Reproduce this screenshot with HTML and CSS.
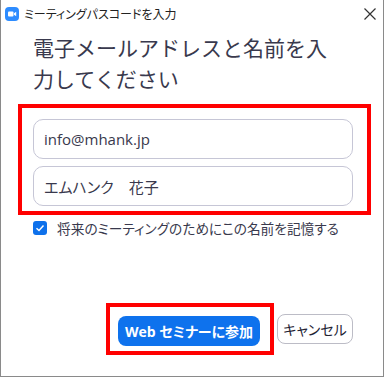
FILE: index.html
```html
<!DOCTYPE html>
<html lang="ja">
<head>
  <meta charset="UTF-8" />
  <title>ミーティングパスコードを入力</title>
  <link rel="stylesheet" href="styles.css">
</head>
<body>
  <div class="window">
    <div class="titlebar">
      <svg class="app-icon" width="14" height="14" viewBox="0 0 14 14">
        <rect x="0" y="0" width="14" height="14" rx="4" fill="#2d8cff"/>
        <rect x="3" y="4.5" width="5.5" height="5" rx="1" fill="#fff"/>
        <path d="M9 6.2 L11.2 4.8 V9.2 L9 7.8 Z" fill="#fff"/>
      </svg>
      <span class="title">ミーティングパスコードを入力</span>
      <svg class="close" width="12" height="12" viewBox="0 0 12 12">
        <path d="M0.5 0.5 L11.5 11.5 M11.5 0.5 L0.5 11.5" stroke="#333" stroke-width="1.2" fill="none"/>
      </svg>
    </div>

    <div class="content">
      <h1 class="heading">電子メールアドレスと名前を入力してください</h1>

      <div class="mark mark-fields">
        <div class="field">info@mhank.jp</div>
        <div class="field">エムハンク　花子</div>
      </div>

      <label class="remember">
        <span class="checkbox">
          <svg width="10" height="10" viewBox="0 0 10 10">
            <path d="M1.5 5.2 L4 7.5 L8.5 2.5" stroke="#fff" stroke-width="1.5" fill="none"/>
          </svg>
        </span>
        将来のミーティングのためにこの名前を記憶する
      </label>

      <div class="actions">
        <div class="mark mark-button">
          <button class="btn btn-primary">Web セミナーに参加</button>
        </div>
        <button class="btn btn-cancel">キャンセル</button>
      </div>
    </div>
  </div>
</body>
</html>
```

FILE: styles.css
```css
* {
  box-sizing: border-box;
}
body {
  margin: 0;
  background: #fff;
  font-family: "Noto Sans CJK JP", "Noto Sans", sans-serif;
  color: #232333;
}
.window {
  width: 384px;
  height: 377px;
  border: 1px solid #8a8a8a;
  border-top: none;
  background: #fff;
}
.titlebar {
  height: 26px;
  display: flex;
  align-items: center;
  padding: 0 0 0 4px;
}
.app-icon {
  margin-top: 1px;
}
.title {
  margin-left: 5px;
  font-size: 12px;
  font-feature-settings: "palt";
  color: #222;
}
.close {
  margin-left: auto;
  margin-right: 7px;
  margin-top: 1px;
}
.content {
  padding: 0 0 0 17px;
}
.heading {
  margin: 6px 0 0 15px;
  width: 304px;
  font-size: 21px;
  font-weight: normal;
  line-height: 31px;
  color: #39394d;
}
.mark {
  border: 4px solid #ff0000;
}
.mark-fields {
  width: 353px;
  margin-top: 10px;
  padding: 11px 0 5px 11px;
  display: flex;
  flex-direction: column;
  gap: 7px;
}
.field {
  width: 320px;
  height: 40px;
  border: 1px solid #c6c6d6;
  border-radius: 10px;
  padding-left: 10px;
  display: flex;
  align-items: center;
  font-family: "Open Sans", "Noto Sans CJK JP", sans-serif;
  font-size: 15px;
  font-feature-settings: "palt";
  color: #39394d;
}
.remember {
  display: flex;
  align-items: center;
  margin: 3px 0 0 15px;
  font-size: 13.7px;
  line-height: 20px;
  font-feature-settings: "palt";
  color: #39394d;
}
.checkbox {
  width: 14px;
  height: 14px;
  border-radius: 3px;
  background: #0e71eb;
  display: flex;
  align-items: center;
  justify-content: center;
  margin-right: 10px;
}
.actions {
  display: flex;
  align-items: center;
  gap: 3px;
  margin: 65px 0 0 88px;
}
.mark-button {
  padding: 9px 10px 5px 8px;
}
.btn {
  height: 30px;
  padding: 0;
  border-radius: 8px;
  white-space: nowrap;
  font-family: "Open Sans", "Noto Sans CJK JP", sans-serif;
  font-size: 14px;
  font-feature-settings: "palt";
  cursor: pointer;
}
.btn-primary {
  display: block;
  width: 142px;
  border: none;
  background: #0e72ed;
  color: #fff;
  font-weight: bold;
}
.btn-cancel {
  width: 76px;
  border: 1px solid #bcbcc6;
  background: #fff;
  color: #232333;
}
```
